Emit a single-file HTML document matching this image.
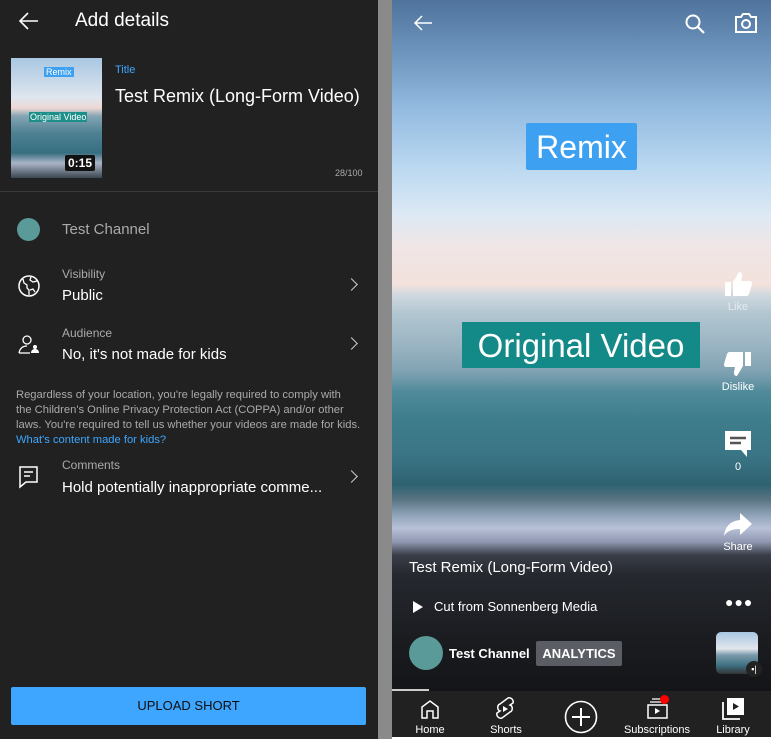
<!DOCTYPE html>
<html><head><meta charset="utf-8"><style>
*{margin:0;padding:0;box-sizing:border-box}
body{width:775px;height:739px;background:#fff;font-family:"Liberation Sans",sans-serif;position:relative;overflow:hidden}
.abs{position:absolute}
#left{left:0;top:0;width:378px;height:739px;background:#212121;color:#fff}
#div{left:378px;top:0;width:14px;height:739px;background:#8a8a8a}
#right{left:392px;top:0;width:379px;height:737px;overflow:hidden;
background:linear-gradient(180deg,#4f739c 0px,#6b93bb 50px,#94bbe0 110px,#bcd9f1 170px,#dde9f4 215px,#efe6e6 245px,#f3e2dc 285px,#cfd9df 295px,#b0c5d0 315px,#9bb4c2 345px,#7fa2b2 372px,#4f8a9a 392px,#3e7d8c 420px,#3a7585 455px,#2f6271 485px,#5a7584 500px,#8fa3b8 515px,#b8c1d8 528px,#8e97b0 542px,#3a3e48 555px,#25282e 575px,#1a1c20 640px,#141518 690px)}
.lbl{font-size:12px;color:#aaa}
.val{font-size:15px;color:#fff}
.chev{position:absolute;right:22px;width:9px;height:9px;border-right:1.6px solid #ccc;border-top:1.6px solid #ccc;transform:rotate(45deg)}
.side{position:absolute;left:321px;width:50px;text-align:center;color:#fff;font-size:11px}
.nav{position:absolute;top:724px;font-size:11px;color:#fff;text-align:center;width:80px}
</style></head><body>
<div id="left" class="abs">
  <svg class="abs" style="left:18px;top:11px" width="22" height="20"><path d="M20 10H3M10 2L2 10l8 8" stroke="#fff" stroke-width="1.6" fill="none"/></svg>
  <div class="abs" style="left:75px;top:10px;font-size:19px">Add details</div>
  <div class="abs" style="left:11px;top:58px;width:91px;height:120px;overflow:hidden;background:linear-gradient(180deg,#a9c7e2 0,#dfe6ee 40px,#eed8d4 50px,#86a5b4 58px,#4e8193 75px,#376f80 95px,#aab5c8 105px,#3b4650 120px)">
    <div class="abs" style="left:33px;top:9px;background:#3ea0f0;color:#fff;font-size:9px;padding:0 2px">Remix</div>
    <div class="abs" style="left:18px;top:54px;background:#1d8f8a;color:#fff;font-size:9px;padding:0 1px">Original Video</div>
    <div class="abs" style="left:54px;top:97px;background:#111;color:#fff;font-size:12px;font-weight:bold;padding:1px 3px;border-radius:2px">0:15</div>
  </div>
  <div class="abs" style="left:115px;top:64px;font-size:11px;color:#3ea6ff">Title</div>
  <div class="abs" style="left:115px;top:86px;font-size:18px">Test Remix (Long-Form Video)</div>
  <div class="abs" style="left:335px;top:168px;font-size:9px;color:#aaa">28/100</div>
  <div class="abs" style="left:0;top:191px;width:378px;height:1px;background:#3a3a3a"></div>
  <div class="abs" style="left:17px;top:218px;width:23px;height:23px;border-radius:50%;background:#5a9a98"></div>
  <div class="abs" style="left:62px;top:221px;font-size:15px;color:#aaa">Test Channel</div>
  <svg class="abs" style="left:17px;top:274px" width="24" height="24" viewBox="0 0 24 24"><circle cx="12" cy="12" r="10" fill="none" stroke="#fff" stroke-width="1.5"/><path d="M6 5l1 4 3 2v3l2 2v5M14 3l-1 3 3 2 4-1M18 18l-2-3-3 1" fill="none" stroke="#fff" stroke-width="1.3"/></svg>
  <div class="abs lbl" style="left:62px;top:267px">Visibility</div>
  <div class="abs val" style="left:62px;top:287px">Public</div>
  <div class="chev" style="top:280px"></div>
  <svg class="abs" style="left:17px;top:334px" width="24" height="22" viewBox="0 0 24 22"><circle cx="10" cy="6" r="4" fill="none" stroke="#fff" stroke-width="1.3"/><path d="M2 19c1-5 4-7 8-7" fill="none" stroke="#fff" stroke-width="1.3"/><path d="M2 19h11" stroke="#fff" stroke-width="1.3"/><circle cx="18" cy="13" r="2" fill="#fff"/><path d="M14 19c0-3 2-4 4-4s4 1 4 4z" fill="#fff"/></svg>
  <div class="abs lbl" style="left:62px;top:326px">Audience</div>
  <div class="abs val" style="left:62px;top:346px">No, it's not made for kids</div>
  <div class="chev" style="top:339px"></div>
  <div class="abs" style="left:16px;top:388px;width:360px;font-size:11.2px;line-height:15px;color:#aaa;white-space:nowrap">Regardless of your location, you're legally required to comply with<br>the Children's Online Privacy Protection Act (COPPA) and/or other<br>laws. You're required to tell us whether your videos are made for kids.<br><span style="color:#3ea6ff">What's content made for kids?</span></div>
  <svg class="abs" style="left:18px;top:465px" width="22" height="24" viewBox="0 0 22 24"><path d="M2 2h17v15H8l-6 5z" fill="none" stroke="#fff" stroke-width="1.5"/><path d="M6 7h9M6 11h6" stroke="#fff" stroke-width="1.5"/></svg>
  <div class="abs lbl" style="left:62px;top:458px">Comments</div>
  <div class="abs val" style="left:62px;top:479px">Hold potentially inappropriate comme...</div>
  <div class="chev" style="top:472px"></div>
  <div class="abs" style="left:11px;top:687px;width:355px;height:38px;background:#3ea6ff;border-radius:2px;color:#0f0f0f;font-size:13px;text-align:center;line-height:38px">UPLOAD SHORT</div>
</div>
<div id="div" class="abs"></div>
<div id="right" class="abs">
  <svg class="abs" style="left:20px;top:14px" width="22" height="18"><path d="M20 9H3M10 2L3 9l7 7" stroke="#fff" stroke-width="1.5" fill="none"/></svg>
  <svg class="abs" style="left:292px;top:13px" width="22" height="22"><circle cx="9" cy="9" r="6.5" fill="none" stroke="#fff" stroke-width="2"/><path d="M14 14l6 6" stroke="#fff" stroke-width="2.2"/></svg>
  <svg class="abs" style="left:342px;top:12px" width="24" height="22"><path d="M2 5h5l2-3h6l2 3h5v15H2z" fill="none" stroke="#fff" stroke-width="2"/><circle cx="12" cy="12" r="4" fill="none" stroke="#fff" stroke-width="2"/></svg>
  <div class="abs" style="left:134px;top:123px;width:111px;height:47px;background:#3ea0f0;color:#fff;font-size:32px;text-align:center;line-height:49px;border-radius:2px">Remix</div>
  <div class="abs" style="left:70px;top:322px;width:238px;height:46px;background:#138a88;color:#fff;font-size:33px;text-align:center;line-height:48px">Original Video</div>
  <div class="side" style="top:270px"><svg width="30" height="28" viewBox="0 0 30 28"><path d="M2 12h6v14H2zM10 12l6-10c3 0 3 2 3 4l-1 5h9c2 0 2 2 2 3l-3 10c-1 2-2 2-3 2H10z" fill="#fff"/></svg><div style="opacity:.6">Like</div></div>
  <div class="side" style="top:350px"><svg width="30" height="28" viewBox="0 0 30 28"><path d="M22 2h6v14h-6zM20 16l-6 10c-3 0-3-2-3-4l1-5H3c-2 0-2-2-2-3l3-10c1-2 2-2 3-2h13z" fill="#fff"/></svg><div>Dislike</div></div>
  <div class="side" style="top:430px"><svg width="28" height="28" viewBox="0 0 28 28"><path d="M1 1h26v19h-4v7l-6-7H1z" fill="#fff"/><path d="M6 8h16M6 13h11" stroke="#555" stroke-width="2.5"/></svg><div>0</div></div>
  <div class="side" style="top:512px"><svg width="30" height="26" viewBox="0 0 30 26"><path d="M17 1l12 11-12 11v-6C9 17 4 19 1 24 2 15 7 9 17 8z" fill="#fff"/></svg><div>Share</div></div>
  <div class="abs" style="left:333px;top:594px;color:#fff;font-size:14px;letter-spacing:1px">●●●</div>
  <div class="abs" style="left:17px;top:559px;color:#fff;font-size:15px">Test Remix (Long-Form Video)</div>
  <svg class="abs" style="left:21px;top:601px" width="10" height="12"><path d="M0 0l10 6-10 6z" fill="#fff"/></svg>
  <div class="abs" style="left:42px;top:599px;color:#fff;font-size:13px">Cut from Sonnenberg Media</div>
  <div class="abs" style="left:17px;top:636px;width:34px;height:34px;border-radius:50%;background:#5a9a98"></div>
  <div class="abs" style="left:57px;top:646px;color:#fff;font-size:13px;font-weight:bold">Test Channel</div>
  <div class="abs" style="left:144px;top:641px;width:86px;height:25px;background:#5a5d63;color:#fff;font-size:13px;font-weight:bold;text-align:center;line-height:25px;border-radius:2px">ANALYTICS</div>
  <div class="abs" style="left:324px;top:632px;width:42px;height:42px;border-radius:5px;background:linear-gradient(180deg,#a9c7e2,#e2e6ec 40%,#7a9aab 55%,#3d6f80 80%,#333 100%)"></div>
  <div class="abs" style="left:354px;top:661px;width:16px;height:16px;border-radius:50%;background:#222;color:#fff;font-size:9px;text-align:center;line-height:16px">▪|</div>
  <div class="abs" style="left:0;top:689px;width:37px;height:2px;background:#ccc"></div>
  <div class="abs" style="left:0;top:691px;width:379px;height:46px;background:#212121"></div>
  <svg class="abs" style="left:27px;top:698px" width="22" height="22"><path d="M3 20V9l8-6 8 6v11h-5v-7H8v7z" fill="none" stroke="#fff" stroke-width="1.5"/></svg>
  <div class="nav" style="left:-2px">Home</div>
  <svg class="abs" style="left:102px;top:696px" width="22" height="26" viewBox="0 0 22 26"><path d="M14 2c3-1 6 2 5 5l-3 2c3 1 3 6 0 7l-8 6c-3 1-6-2-5-5l3-2c-3-1-3-6 0-7z" fill="none" stroke="#fff" stroke-width="1.5"/><path d="M9 10l5 3-5 3z" fill="#fff"/></svg>
  <div class="nav" style="left:74px">Shorts</div>
  <svg class="abs" style="left:172px;top:700px" width="34" height="34"><circle cx="17" cy="17" r="15.5" fill="none" stroke="#fff" stroke-width="1.6"/><path d="M17 8v18M8 17h18" stroke="#fff" stroke-width="2"/></svg>
  <svg class="abs" style="left:254px;top:697px" width="24" height="24"><path d="M6 2h10M4 5h13" stroke="#fff" stroke-width="1.3"/><rect x="2" y="8" width="19" height="13" fill="none" stroke="#fff" stroke-width="1.5"/><path d="M9 11l5 3-5 3z" fill="#fff"/></svg>
  <div class="abs" style="left:268px;top:695px;width:9px;height:9px;border-radius:50%;background:#f00"></div>
  <div class="nav" style="left:225px">Subscriptions</div>
  <svg class="abs" style="left:329px;top:697px" width="24" height="24"><path d="M2 5v17h17" fill="none" stroke="#fff" stroke-width="1.8"/><rect x="6" y="1" width="17" height="17" fill="#fff"/><path d="M12 6l6 3.5-6 3.5z" fill="#212121"/></svg>
  <div class="nav" style="left:301px">Library</div>
</div>
</body></html>
